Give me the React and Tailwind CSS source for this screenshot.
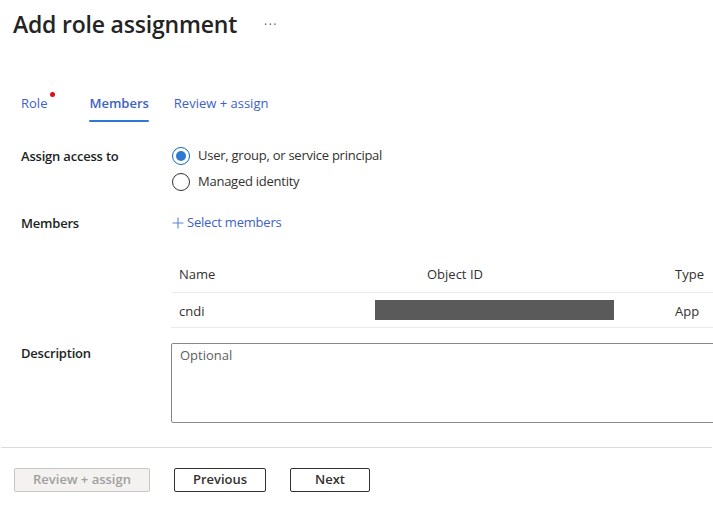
export default function App() {
  const font = { fontFamily: '"Open Sans", "Noto Sans", sans-serif' };
  return (
    <div className="w-[713px] h-[506px] bg-white relative overflow-hidden text-[#323130]" style={font}>
      {/* Title */}
      <div className="flex items-center h-[46px] pl-[13px] pt-[1px]">
        <h1 className="text-[23px] font-semibold tracking-[-0.2px] leading-[30px] text-[#242424]">Add role assignment</h1>
        <span className="ml-[27px] text-[12px] tracking-[1.5px] text-[#605e5c] leading-none mt-[2px]">···</span>
      </div>

      {/* Tabs */}
      <div className="flex items-start pl-[21px] mt-[43px] h-[34px] text-[13px] text-[#3d62c4]">
        <div className="relative pt-[5px]">
          Role
          <span className="absolute right-[-8px] top-[3px] w-[5px] h-[5px] rounded-full bg-[#e00b1c]"></span>
        </div>
        <div className="ml-[42px] flex flex-col">
          <span className="pt-[5px] font-semibold">Members</span>
          <span className="mt-[6px] h-[2px] bg-[#2f78d4] rounded"></span>
        </div>
        <div className="ml-[25px] pt-[5px]">Review + assign</div>
      </div>

      {/* Assign access to */}
      <div className="flex mt-[19px] text-[13px]">
        <div className="w-[171px] shrink-0 pl-[21px] font-semibold leading-[18px] pt-[5px] text-[#201f1e] tracking-[-0.2px]">Assign access to</div>
        <div className="flex flex-col gap-[8px] tracking-[-0.25px]">
          <div className="flex items-center h-[18px] mt-[5px]">
            <span className="ml-[1px] w-[18px] h-[18px] rounded-full border border-[#0f6cbd] flex items-center justify-center">
              <span className="w-[10px] h-[10px] rounded-full bg-[#2f78d4]"></span>
            </span>
            <span className="ml-[8px]">User, group, or service principal</span>
          </div>
          <div className="flex items-center h-[18px]">
            <span className="ml-[1px] w-[18px] h-[18px] rounded-full border border-[#323130]"></span>
            <span className="ml-[8px]">Managed identity</span>
          </div>
        </div>
      </div>

      {/* Members */}
      <div className="flex mt-[23px] text-[13px]">
        <div className="w-[171px] shrink-0 pl-[21px] font-semibold leading-[18px] text-[#201f1e] tracking-[-0.2px]">Members</div>
        <div className="flex items-center h-[18px] text-[#3d62c4] tracking-[-0.2px]">
          <svg width="12" height="12" viewBox="0 0 12 12" className="ml-[1px]">
            <path d="M6 0.5V11.5M0.5 6H11.5" stroke="#5b86d6" strokeWidth="1.1" fill="none" />
          </svg>
          <span className="ml-[3px]">Select members</span>
        </div>
      </div>

      {/* Table */}
      <div className="ml-[171px] mt-[25px] w-[600px] text-[13px] relative">
        <div className="flex h-[36px] items-center border-b border-[#edebe9] font-medium text-[#323130]">
          <div className="w-[248px] pl-[8px]">Name</div>
          <div className="w-[248px] pl-[8px]">Object ID</div>
          <div className="pl-[8px]">Type</div>
        </div>
        <div className="flex h-[35px] items-center pt-[4px] border-b border-[#edebe9]">
          <div className="w-[248px] pl-[8px]">cndi</div>
          <div className="w-[248px] pl-[8px]"></div>
          <div className="pl-[8px]">App</div>
        </div>
        <div className="absolute left-[204px] top-[43px] w-[239px] h-[20px] bg-[#5a5a5a]"></div>
      </div>

      {/* Description */}
      <div className="flex mt-[15px] text-[13px]">
        <div className="w-[171px] shrink-0 pl-[21px] font-semibold leading-[18px] pt-[1px] text-[#201f1e] tracking-[-0.2px]">Description</div>
        <div className="w-[600px] shrink-0 h-[80px] border border-[#8a8886] rounded-[2px] px-[8px] pt-[2px] text-[#605e5c]">Optional</div>
      </div>

      {/* Separator */}
      <div className="mt-[24px] mx-[1px] h-[1px] bg-[#dcdcdc]"></div>

      {/* Buttons */}
      <div className="flex items-center mt-[20px] text-[13px] font-semibold">
        <button className="ml-[14px] w-[136px] h-[24px] border border-[#c8c6c4] bg-[#f3f2f1] text-[#a19f9d] rounded-[2px]">Review + assign</button>
        <button className="ml-[24px] w-[92px] h-[24px] border border-[#323130] bg-white text-[#323130] rounded-[2px]">Previous</button>
        <button className="ml-[24px] w-[80px] h-[24px] border border-[#323130] bg-white text-[#323130] rounded-[2px]">Next</button>
      </div>
    </div>
  );
}
